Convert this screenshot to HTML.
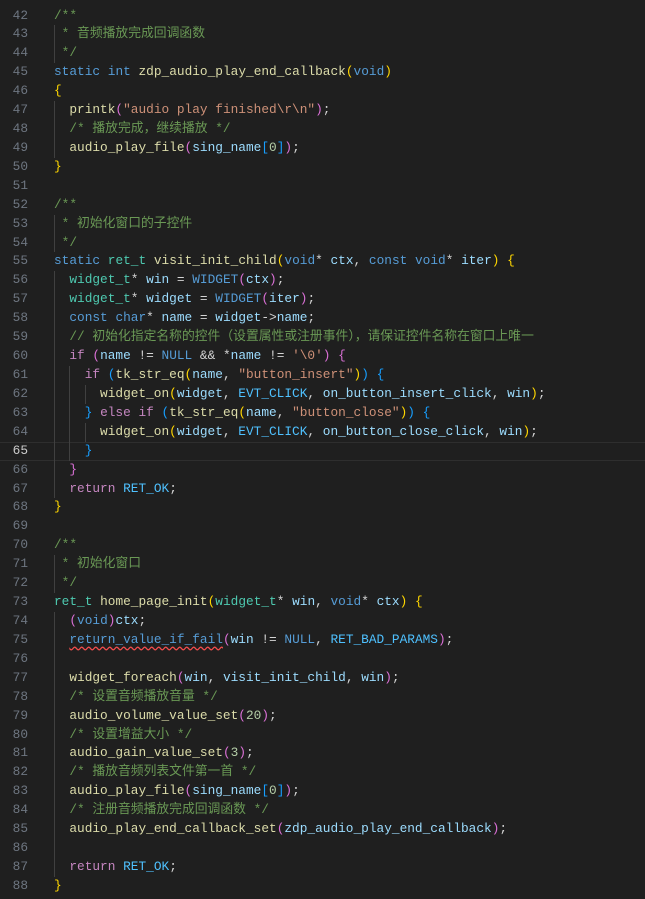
<!DOCTYPE html>
<html><head><meta charset="utf-8"><style>
body{margin:0;background:#1f1f1f;width:645px;height:899px;overflow:hidden}
#w{position:absolute;top:6.5px;left:0;width:645px;font-family:"Liberation Mono","Noto Sans CJK SC",monospace;font-size:12.8px;color:#d4d4d4}
.l{height:18.93px;line-height:18.93px;white-space:pre;position:relative}
.n{position:absolute;left:0;width:28px;text-align:right;color:#6e7681}
.a .n{color:#cccccc}
.a{box-shadow:inset 0 1px #2e2e2e,inset 0 -1px #2e2e2e}
.c{position:absolute;left:54px}
.g{display:inline-block;width:2ch;box-shadow:inset 1px 0 #404040;height:18.93px;vertical-align:top}
.g1{display:inline-block;width:1ch;box-shadow:inset 1px 0 #404040;height:18.93px;vertical-align:top}
.k{color:#569cd6}.p{color:#c586c0}.f{color:#dcdcaa}.v{color:#9cdcfe}.s{color:#ce9178}.m{color:#6a9955}.t{color:#4ec9b0}.o{color:#4fc1ff}.u{color:#b5cea8}
.b1{color:#ffd700}.b2{color:#da70d6}.b3{color:#179fff}
.sq{text-decoration:underline wavy #f14c4c;text-underline-offset:3px}
</style></head><body><div id="w">
<div class="l"><span class="n">42</span><span class="c"><span class="m">/**</span></span></div>
<div class="l"><span class="n">43</span><span class="c"><span class="g1"></span><span class="m">* 音频播放完成回调函数</span></span></div>
<div class="l"><span class="n">44</span><span class="c"><span class="g1"></span><span class="m">*/</span></span></div>
<div class="l"><span class="n">45</span><span class="c"><span class="k">static</span> <span class="k">int</span> <span class="f">zdp_audio_play_end_callback</span><span class="b1">(</span><span class="k">void</span><span class="b1">)</span></span></div>
<div class="l"><span class="n">46</span><span class="c"><span class="b1">{</span></span></div>
<div class="l"><span class="n">47</span><span class="c"><span class="g"></span><span class="f">printk</span><span class="b2">(</span><span class="s">"audio play finished\r\n"</span><span class="b2">)</span>;</span></div>
<div class="l"><span class="n">48</span><span class="c"><span class="g"></span><span class="m">/* 播放完成，继续播放 */</span></span></div>
<div class="l"><span class="n">49</span><span class="c"><span class="g"></span><span class="f">audio_play_file</span><span class="b2">(</span><span class="v">sing_name</span><span class="b3">[</span><span class="u">0</span><span class="b3">]</span><span class="b2">)</span>;</span></div>
<div class="l"><span class="n">50</span><span class="c"><span class="b1">}</span></span></div>
<div class="l"><span class="n">51</span></div>
<div class="l"><span class="n">52</span><span class="c"><span class="m">/**</span></span></div>
<div class="l"><span class="n">53</span><span class="c"><span class="g1"></span><span class="m">* 初始化窗口的子控件</span></span></div>
<div class="l"><span class="n">54</span><span class="c"><span class="g1"></span><span class="m">*/</span></span></div>
<div class="l"><span class="n">55</span><span class="c"><span class="k">static</span> <span class="t">ret_t</span> <span class="f">visit_init_child</span><span class="b1">(</span><span class="k">void</span>* <span class="v">ctx</span>, <span class="k">const</span> <span class="k">void</span>* <span class="v">iter</span><span class="b1">)</span> <span class="b1">{</span></span></div>
<div class="l"><span class="n">56</span><span class="c"><span class="g"></span><span class="t">widget_t</span>* <span class="v">win</span> = <span class="k">WIDGET</span><span class="b2">(</span><span class="v">ctx</span><span class="b2">)</span>;</span></div>
<div class="l"><span class="n">57</span><span class="c"><span class="g"></span><span class="t">widget_t</span>* <span class="v">widget</span> = <span class="k">WIDGET</span><span class="b2">(</span><span class="v">iter</span><span class="b2">)</span>;</span></div>
<div class="l"><span class="n">58</span><span class="c"><span class="g"></span><span class="k">const</span> <span class="k">char</span>* <span class="v">name</span> = <span class="v">widget</span>-&gt;<span class="v">name</span>;</span></div>
<div class="l"><span class="n">59</span><span class="c"><span class="g"></span><span class="m">// 初始化指定名称的控件（设置属性或注册事件），请保证控件名称在窗口上唯一</span></span></div>
<div class="l"><span class="n">60</span><span class="c"><span class="g"></span><span class="p">if</span> <span class="b2">(</span><span class="v">name</span> != <span class="k">NULL</span> &amp;&amp; *<span class="v">name</span> != <span class="s">'\0'</span><span class="b2">)</span> <span class="b2">{</span></span></div>
<div class="l"><span class="n">61</span><span class="c"><span class="g"></span><span class="g"></span><span class="p">if</span> <span class="b3">(</span><span class="f">tk_str_eq</span><span class="b1">(</span><span class="v">name</span>, <span class="s">"button_insert"</span><span class="b1">)</span><span class="b3">)</span> <span class="b3">{</span></span></div>
<div class="l"><span class="n">62</span><span class="c"><span class="g"></span><span class="g"></span><span class="g"></span><span class="f">widget_on</span><span class="b1">(</span><span class="v">widget</span>, <span class="o">EVT_CLICK</span>, <span class="v">on_button_insert_click</span>, <span class="v">win</span><span class="b1">)</span>;</span></div>
<div class="l"><span class="n">63</span><span class="c"><span class="g"></span><span class="g"></span><span class="b3">}</span> <span class="p">else</span> <span class="p">if</span> <span class="b3">(</span><span class="f">tk_str_eq</span><span class="b1">(</span><span class="v">name</span>, <span class="s">"button_close"</span><span class="b1">)</span><span class="b3">)</span> <span class="b3">{</span></span></div>
<div class="l"><span class="n">64</span><span class="c"><span class="g"></span><span class="g"></span><span class="g"></span><span class="f">widget_on</span><span class="b1">(</span><span class="v">widget</span>, <span class="o">EVT_CLICK</span>, <span class="v">on_button_close_click</span>, <span class="v">win</span><span class="b1">)</span>;</span></div>
<div class="l a"><span class="n">65</span><span class="c"><span class="g"></span><span class="g"></span><span class="b3">}</span></span></div>
<div class="l"><span class="n">66</span><span class="c"><span class="g"></span><span class="b2">}</span></span></div>
<div class="l"><span class="n">67</span><span class="c"><span class="g"></span><span class="p">return</span> <span class="o">RET_OK</span>;</span></div>
<div class="l"><span class="n">68</span><span class="c"><span class="b1">}</span></span></div>
<div class="l"><span class="n">69</span></div>
<div class="l"><span class="n">70</span><span class="c"><span class="m">/**</span></span></div>
<div class="l"><span class="n">71</span><span class="c"><span class="g1"></span><span class="m">* 初始化窗口</span></span></div>
<div class="l"><span class="n">72</span><span class="c"><span class="g1"></span><span class="m">*/</span></span></div>
<div class="l"><span class="n">73</span><span class="c"><span class="t">ret_t</span> <span class="f">home_page_init</span><span class="b1">(</span><span class="t">widget_t</span>* <span class="v">win</span>, <span class="k">void</span>* <span class="v">ctx</span><span class="b1">)</span> <span class="b1">{</span></span></div>
<div class="l"><span class="n">74</span><span class="c"><span class="g"></span><span class="b2">(</span><span class="k">void</span><span class="b2">)</span><span class="v">ctx</span>;</span></div>
<div class="l"><span class="n">75</span><span class="c"><span class="g"></span><span class="k sq">return_value_if_fail</span><span class="b2">(</span><span class="v">win</span> != <span class="k">NULL</span>, <span class="o">RET_BAD_PARAMS</span><span class="b2">)</span>;</span></div>
<div class="l"><span class="n">76</span><span class="c"><span class="g"></span></span></div>
<div class="l"><span class="n">77</span><span class="c"><span class="g"></span><span class="f">widget_foreach</span><span class="b2">(</span><span class="v">win</span>, <span class="v">visit_init_child</span>, <span class="v">win</span><span class="b2">)</span>;</span></div>
<div class="l"><span class="n">78</span><span class="c"><span class="g"></span><span class="m">/* 设置音频播放音量 */</span></span></div>
<div class="l"><span class="n">79</span><span class="c"><span class="g"></span><span class="f">audio_volume_value_set</span><span class="b2">(</span><span class="u">20</span><span class="b2">)</span>;</span></div>
<div class="l"><span class="n">80</span><span class="c"><span class="g"></span><span class="m">/* 设置增益大小 */</span></span></div>
<div class="l"><span class="n">81</span><span class="c"><span class="g"></span><span class="f">audio_gain_value_set</span><span class="b2">(</span><span class="u">3</span><span class="b2">)</span>;</span></div>
<div class="l"><span class="n">82</span><span class="c"><span class="g"></span><span class="m">/* 播放音频列表文件第一首 */</span></span></div>
<div class="l"><span class="n">83</span><span class="c"><span class="g"></span><span class="f">audio_play_file</span><span class="b2">(</span><span class="v">sing_name</span><span class="b3">[</span><span class="u">0</span><span class="b3">]</span><span class="b2">)</span>;</span></div>
<div class="l"><span class="n">84</span><span class="c"><span class="g"></span><span class="m">/* 注册音频播放完成回调函数 */</span></span></div>
<div class="l"><span class="n">85</span><span class="c"><span class="g"></span><span class="f">audio_play_end_callback_set</span><span class="b2">(</span><span class="v">zdp_audio_play_end_callback</span><span class="b2">)</span>;</span></div>
<div class="l"><span class="n">86</span><span class="c"><span class="g"></span></span></div>
<div class="l"><span class="n">87</span><span class="c"><span class="g"></span><span class="p">return</span> <span class="o">RET_OK</span>;</span></div>
<div class="l"><span class="n">88</span><span class="c"><span class="b1">}</span></span></div>
</div></body></html>
